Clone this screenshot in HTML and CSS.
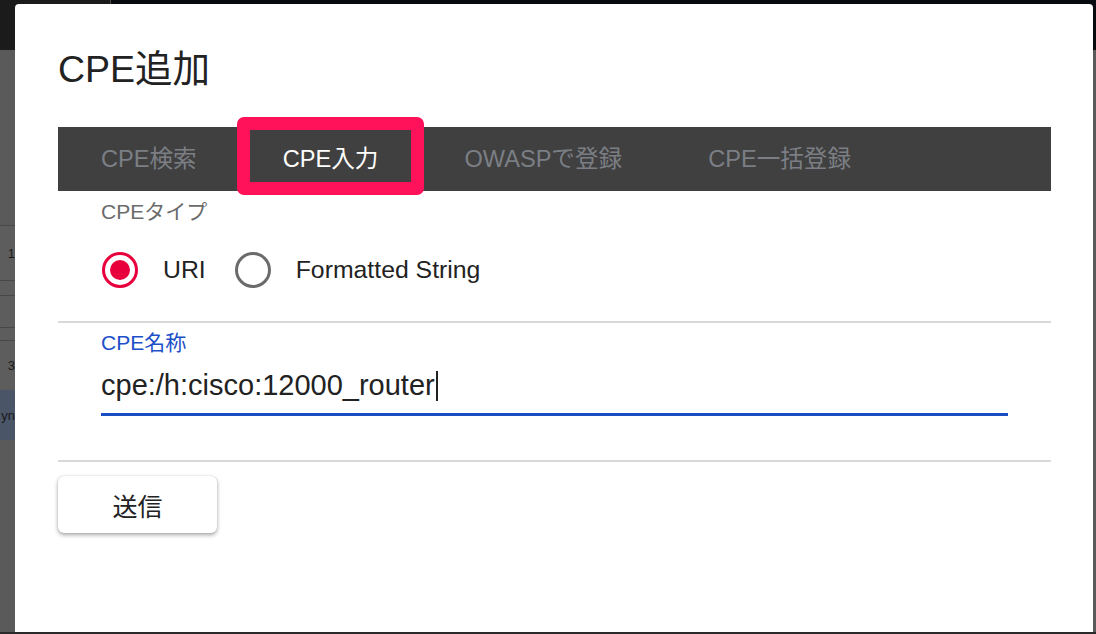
FILE: index.html
```html
<!DOCTYPE html>
<html>
<head>
    <title>CPE追加</title>
    <link rel="stylesheet" href="styles.css">
</head>
<body>
    <!-- page behind the dialog -->
    <div class="page">
        <div class="page-header">
            <div class="brand"></div>
            <div class="nav"></div>
        </div>
        <div class="page-body">
            <div class="row row-tall"><span>1</span></div>
            <div class="row row-thin"></div>
            <div class="row row-mid"></div>
            <div class="row row-thin2"></div>
            <div class="row row-tall2"><span>3</span></div>
            <div class="row row-selected"><span>yn</span></div>
        </div>
        <div class="page-footer"></div>
    </div>

    <!-- dialog -->
    <div class="modal">
        <h2 class="modal-title">CPE追加</h2>

        <div class="tabs">
            <div class="tab">CPE検索</div>
            <div class="tab active">CPE入力</div>
            <div class="tab">OWASPで登録</div>
            <div class="tab">CPE一括登録</div>
        </div>

        <div class="section">
            <div class="type-label">CPEタイプ</div>
            <div class="radios">
                <label class="radio">
                    <span class="radio-circle checked"><span class="radio-dot"></span></span>
                    <span class="radio-text">URI</span>
                </label>
                <label class="radio">
                    <span class="radio-circle"></span>
                    <span class="radio-text">Formatted String</span>
                </label>
            </div>
        </div>

        <div class="divider divider-top"></div>

        <div class="section">
            <div class="name-label">CPE名称</div>
            <div class="name-input">cpe:/h:cisco:12000_router<span class="caret"></span></div>
        </div>

        <div class="divider divider-bottom"></div>

        <button class="submit">送信</button>
    </div>
</body>
</html>
```

FILE: styles.css
```css
/* Global styles */
body {
    margin: 0;
    width: 1096px;
    height: 634px;
    overflow: hidden;
    position: relative;
    font-family: "Liberation Sans", Arial, "Noto Sans CJK JP", sans-serif;
    background-color: #5a5a5a;
    color: #222;
}

/* Page behind the dialog */
.page {
    display: flex;
    flex-direction: column;
    height: 634px;
}

.page-header {
    display: flex;
    height: 50px;
}

.page-header .brand {
    width: 110px;
    background-color: #1b1b1b;
    border-right: 1px solid #4a4a4a;
}

.page-header .nav {
    flex: 1;
    background-color: #070b10;
}

.page-body {
    flex: 1;
    padding-top: 175px;
    background-color: #5a5a5a;
}

.row {
    display: flex;
    justify-content: flex-end;
    align-items: center;
    width: 15px;
    border-top: 1px solid #484848;
    font-size: 13px;
    color: #1a1a1a;
    white-space: nowrap;
    background-color: #5d5d5d;
}

.row-tall { height: 54px; }
.row-thin { height: 14px; }
.row-mid { height: 31px; }
.row-thin2 { height: 12px; }
.row-tall2 { height: 49px; }

.row-selected {
    height: 50px;
    border-top: none;
    background-color: #4b5568;
}

.page-footer {
    height: 2px;
    background-color: #2a2a2a;
}

/* Dialog */
.modal {
    position: absolute;
    left: 15px;
    top: 4px;
    width: 1078px;
    height: 628px;
    box-sizing: border-box;
    padding: 42px 42px 0 43px;
    background-color: #fff;
    border-radius: 4px 4px 0 0;
}

.modal-title {
    margin: 0 0 35px;
    font-size: 37.5px;
    line-height: 46px;
    font-weight: normal;
    color: #222;
}

/* Tab bar */
.tabs {
    display: flex;
    height: 64px;
    background-color: #404040;
}

.tab {
    position: relative;
    padding: 0 43px;
    font-size: 23.6px;
    line-height: 64px;
    color: #7b7f85;
    white-space: nowrap;
}

.tab.active {
    color: #fff;
}

/* highlight frame drawn over the active tab */
.tab.active::after {
    content: "";
    position: absolute;
    top: -10px;
    bottom: -4px;
    left: -3px;
    right: -3px;
    border: 13px solid #ff1259;
    border-radius: 7px;
}

/* Form sections */
.section {
    padding: 0 43px;
}

.type-label {
    margin-top: 9px;
    font-size: 21px;
    line-height: 24px;
    color: #6b6b6b;
}

.radios {
    display: flex;
    align-items: center;
    gap: 29px;
    height: 36px;
    margin-top: 28px;
    margin-left: 1px;
}

.radio {
    display: flex;
    align-items: center;
    gap: 25px;
}

.radio-circle {
    display: flex;
    justify-content: center;
    align-items: center;
    width: 36px;
    height: 36px;
    box-sizing: border-box;
    border: 3px solid #6b6b6b;
    border-radius: 50%;
}

.radio-circle.checked {
    border: 3.5px solid #e8003d;
}

.radio-dot {
    width: 20px;
    height: 20px;
    border-radius: 50%;
    background-color: #e8003d;
}

.radio-text {
    font-size: 24.8px;
    line-height: 28px;
    color: #222;
}

.divider {
    height: 2px;
    background-color: #d9d9d9;
}

.divider-top {
    margin-top: 33px;
}

.divider-bottom {
    margin-top: 44px;
}

.name-label {
    margin-top: 8px;
    font-size: 21px;
    line-height: 24px;
    color: #1c50c8;
}

.name-input {
    margin-top: 13px;
    padding-bottom: 11px;
    font-size: 29px;
    line-height: 34px;
    color: #222;
    border-bottom: 3px solid #1a4dc2;
}

.caret {
    display: inline-block;
    width: 2px;
    height: 30px;
    margin-left: 1px;
    vertical-align: -6px;
    background-color: #222;
}

/* Submit button */
.submit {
    display: block;
    width: 159px;
    height: 57px;
    margin-top: 14px;
    border: none;
    border-radius: 6px;
    background-color: #fff;
    box-shadow: 0 2px 4px rgba(0, 0, 0, 0.35), 0 0 1px rgba(0, 0, 0, 0.2);
    font-family: inherit;
    font-size: 25px;
    color: #222;
    cursor: pointer;
}
```
